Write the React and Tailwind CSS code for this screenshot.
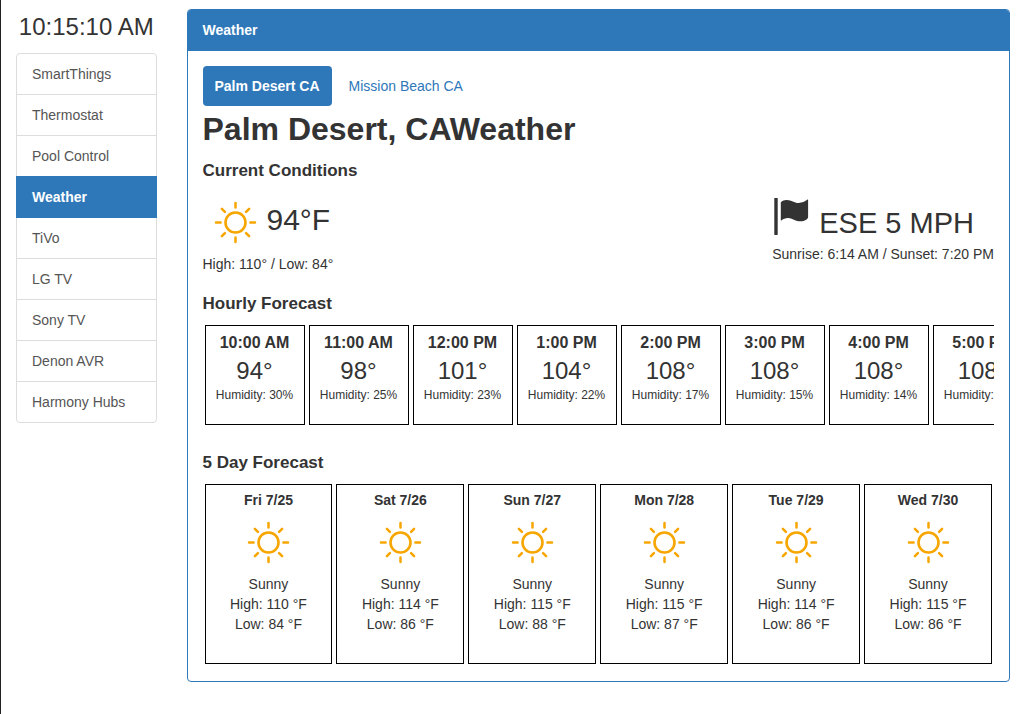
const menu = [
  'SmartThings',
  'Thermostat',
  'Pool Control',
  'Weather',
  'TiVo',
  'LG TV',
  'Sony TV',
  'Denon AVR',
  'Harmony Hubs',
];

const hours = [
  { time: '10:00 AM', temp: 94, humidity: 30 },
  { time: '11:00 AM', temp: 98, humidity: 25 },
  { time: '12:00 PM', temp: 101, humidity: 23 },
  { time: '1:00 PM', temp: 104, humidity: 22 },
  { time: '2:00 PM', temp: 108, humidity: 17 },
  { time: '3:00 PM', temp: 108, humidity: 15 },
  { time: '4:00 PM', temp: 108, humidity: 14 },
  { time: '5:00 PM', temp: 108, humidity: 14 },
];

const days = [
  { date: 'Fri 7/25', high: 110, low: 84 },
  { date: 'Sat 7/26', high: 114, low: 86 },
  { date: 'Sun 7/27', high: 115, low: 88 },
  { date: 'Mon 7/28', high: 115, low: 87 },
  { date: 'Tue 7/29', high: 114, low: 86 },
  { date: 'Wed 7/30', high: 115, low: 86 },
];

function SunIcon() {
  return (
    <svg
      className="h-11 w-11 shrink-0"
      viewBox="0 0 44 44"
      fill="none"
      stroke="#f7a600"
      strokeWidth="2.5"
      strokeLinecap="round"
      aria-hidden="true"
    >
      <circle cx="22.5" cy="22.5" r="10" strokeWidth="2.6" />
      <path d="M22.5 3v4.600M22.5 37.400v4.600M3 22.5h4.600M37.400 22.5h4.600M8.900 8.900l3 3M33.100 33.100l3 3M8.900 36.100l3-3M33.100 11.900l3-3" />
    </svg>
  );
}

function FlagIcon() {
  return (
    <svg className="mt-0.5 h-[38px] w-9 shrink-0" viewBox="0 0 36 38" fill="#333" aria-hidden="true">
      <rect x="1.3" y="0" width="3.4" height="37" rx="0.4" />
      <path d="M7.8 4.2C9.5 2.6 11.500 1.800 13.900 1.900C18.600 2.100 21.100 4.900 25.600 4.900C29.100 4.900 32 3.600 34 1.800C34.700 1.300 35.100 1.600 35.100 2.300V18.800C35.100 20 34.600 20.700 33.600 21.400C31.400 23 28.600 23.600 25.800 23.300C21.300 22.900 19.300 20.400 15.300 20.100C12.800 19.900 10.500 20.900 8.700 22.300C8.100 22.700 7.800 22.500 7.800 21.900Z" />
    </svg>
  );
}

function Heading({ children }) {
  return <h2 className="text-[17px] leading-5 font-bold">{children}</h2>;
}

export default function App() {
  return (
    <div className="flex min-h-screen border-l border-[#222] bg-white font-['Liberation_Sans',Arial,sans-serif] text-sm leading-5 text-[#333]">
      <aside className="w-1/6 shrink-0 px-[15px] pt-3">
        <p className="text-center text-2xl leading-[29px] whitespace-nowrap">10:15:10 AM</p>
        <nav className="mt-3 rounded border border-[#ddd]">
          {menu.map((item) =>
            item === 'Weather' ? (
              <a
                key={item}
                href="#weather"
                aria-current="page"
                className="-mx-px -mt-px block border-b border-[#2e78b9] bg-[#2e78b9] px-4 pt-[11px] pb-2.5 font-bold text-white"
              >
                {item}
              </a>
            ) : (
              <a
                key={item}
                href="#menu"
                className="block border-b border-[#ddd] px-[15px] py-2.5 text-[#555] last:border-b-0"
              >
                {item}
              </a>
            ),
          )}
        </nav>
      </aside>

      <main className="min-w-0 flex-1 pt-[9px] pr-3.5 pb-8 pl-[15px]">
        <section className="overflow-hidden rounded border border-[#2e78b9]">
          <header className="bg-[#2e78b9] px-[15px] pt-2.5 pb-[11px] font-bold text-white">Weather</header>
          <div className="px-[15px] pt-[15px] pb-[17px]">
            <div className="flex gap-0.5">
              <button type="button" className="rounded bg-[#2e78b9] px-3 py-2.5 font-bold text-white">
                Palm Desert CA
              </button>
              <button type="button" className="rounded px-[15px] py-2.5 text-[#2e78b9]">
                Mission Beach CA
              </button>
            </div>

            <h1 className="mt-[3px] text-[32px] leading-10 font-bold">Palm Desert, CAWeather</h1>

            <div className="mt-3">
              <Heading>Current Conditions</Heading>
            </div>
            <div className="mt-[15px] flex justify-between">
              <div>
                <div className="flex items-center gap-2.5 pt-1 pl-[10px]">
                  <SunIcon />
                  <span className="pb-1 text-[30px] leading-9">94°F</span>
                </div>
                <p className="mt-2.5">High: 110° / Low: 84°</p>
              </div>
              <div>
                <div className="flex h-12 items-start gap-2.5 pl-px">
                  <FlagIcon />
                  <span className="pt-[9px] text-[29px] leading-9">ESE 5 MPH</span>
                </div>
                <p>Sunrise: 6:14 AM / Sunset: 7:20 PM</p>
              </div>
            </div>

            <div className="mt-5">
              <Heading>Hourly Forecast</Heading>
            </div>
            <div className="mt-[11px] flex gap-1 overflow-hidden px-0.5">
              {hours.map((h) => (
                <div
                  key={h.time}
                  className="h-[100px] w-[100px] shrink-0 border border-black pt-1.5 text-center whitespace-nowrap"
                >
                  <p className="text-base leading-[22px] font-bold">{h.time}</p>
                  <p className="text-2xl leading-[34px]">{h.temp}°</p>
                  <p className="text-xs leading-[14px]">Humidity: {h.humidity}%</p>
                </div>
              ))}
            </div>

            <div className="mt-7">
              <Heading>5 Day Forecast</Heading>
            </div>
            <div className="mt-[11px] grid grid-cols-6 gap-1 px-0.5">
              {days.map((d) => (
                <div
                  key={d.date}
                  className="flex h-[180px] flex-col items-center border border-black pt-[5px]"
                >
                  <p className="font-bold">{d.date}</p>
                  <div className="mt-2.5 mb-2.5">
                    <SunIcon />
                  </div>
                  <p>Sunny</p>
                  <p>High: {d.high} °F</p>
                  <p>Low: {d.low} °F</p>
                </div>
              ))}
            </div>
          </div>
        </section>
      </main>
    </div>
  );
}
